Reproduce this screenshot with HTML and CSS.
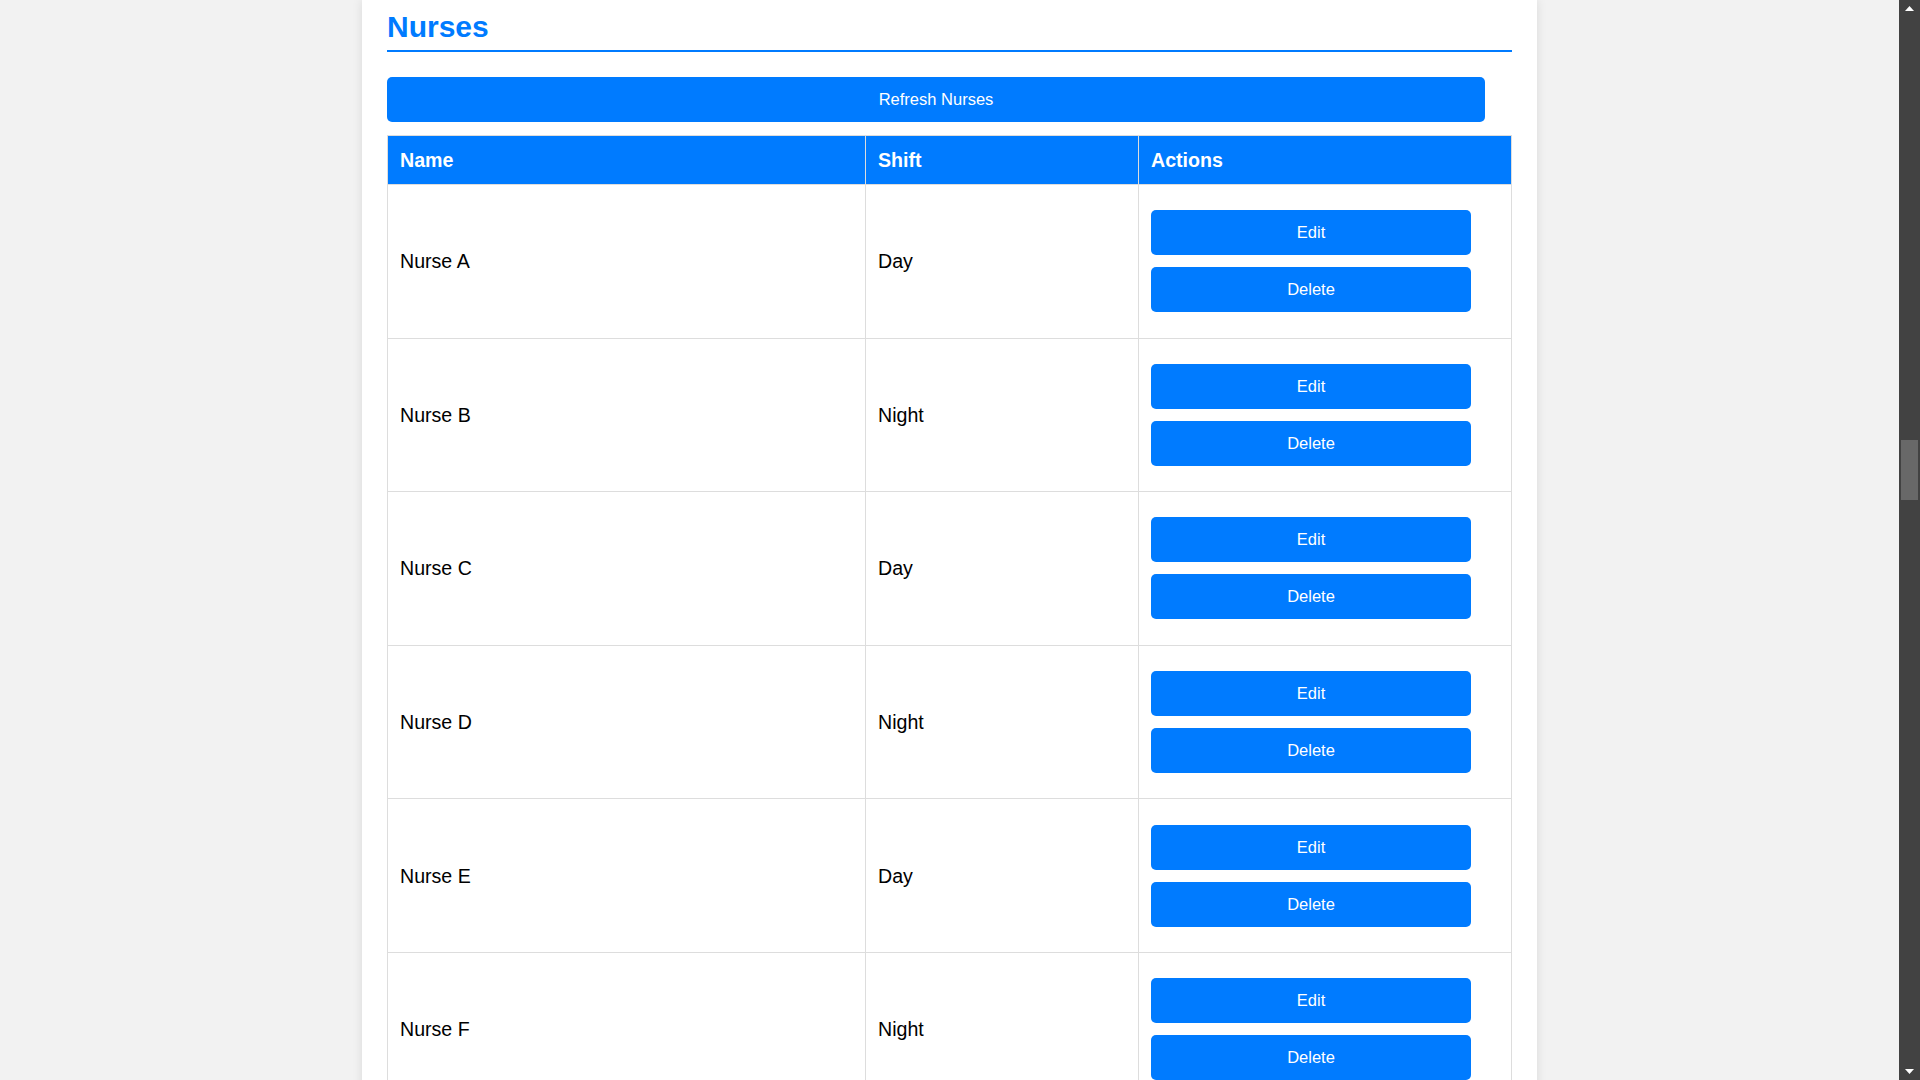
FILE: index.html
```html
<!DOCTYPE html>
<html lang="en">
<head>
<meta charset="utf-8">
<title>Nurses</title>
<link rel="stylesheet" href="styles.css">
</head>
<body>
<div class="page">
  <main class="container">
    <h2 class="section-title">Nurses</h2>
    <button class="btn btn-refresh">Refresh Nurses</button>
    <table class="nurse-table">
      <colgroup>
        <col class="col-name">
        <col class="col-shift">
        <col class="col-actions">
      </colgroup>
      <thead>
        <tr><th>Name</th><th>Shift</th><th>Actions</th></tr>
      </thead>
      <tbody>
        <tr><td>Nurse A</td><td>Day</td><td class="actions"><div class="action-stack"><button class="btn btn-action">Edit</button><button class="btn btn-action">Delete</button></div></td></tr>
        <tr><td>Nurse B</td><td>Night</td><td class="actions"><div class="action-stack"><button class="btn btn-action">Edit</button><button class="btn btn-action">Delete</button></div></td></tr>
        <tr><td>Nurse C</td><td>Day</td><td class="actions"><div class="action-stack"><button class="btn btn-action">Edit</button><button class="btn btn-action">Delete</button></div></td></tr>
        <tr><td>Nurse D</td><td>Night</td><td class="actions"><div class="action-stack"><button class="btn btn-action">Edit</button><button class="btn btn-action">Delete</button></div></td></tr>
        <tr><td>Nurse E</td><td>Day</td><td class="actions"><div class="action-stack"><button class="btn btn-action">Edit</button><button class="btn btn-action">Delete</button></div></td></tr>
        <tr><td>Nurse F</td><td>Night</td><td class="actions"><div class="action-stack"><button class="btn btn-action">Edit</button><button class="btn btn-action">Delete</button></div></td></tr>
      </tbody>
    </table>
  </main>
</div>
<div class="scrollbar">
  <div class="sb-arrow">
    <svg width="9" height="5" viewBox="0 0 9 5"><polygon points="4.5,0 9,5 0,5" fill="#fff"/></svg>
  </div>
  <div class="sb-track"><div class="sb-thumb"></div></div>
  <div class="sb-arrow">
    <svg width="9" height="5" viewBox="0 0 9 5"><polygon points="0,0 9,0 4.5,5" fill="#fff"/></svg>
  </div>
</div>
</body>
</html>
```

FILE: styles.css
```css
html, body {
  margin: 0;
  padding: 0;
  height: 100%;
}

body {
  display: flex;
  height: 100vh;
  overflow: hidden;
  font-family: "Liberation Sans", Arial, sans-serif;
  color: #000;
}

.page {
  flex: 1;
  background: #f2f2f2;
  overflow: hidden;
}

.container {
  width: 1125px;
  min-height: 100%;
  margin: 0 auto;
  padding: 10px 25px 0;
  background: #fff;
  box-shadow: 0 0 10px rgba(0, 0, 0, 0.1);
}

.section-title {
  margin: 0;
  font-size: 30px;
  line-height: 34px;
  font-weight: bold;
  color: #007bff;
  padding-bottom: 6px;
  border-bottom: 2px solid #007bff;
}

.btn {
  font-family: "Liberation Sans", Arial, sans-serif;
  font-size: 16.5px;
  color: #fff;
  background: #007bff;
  border: none;
  border-radius: 5px;
  padding: 0;
  height: 45px;
  cursor: pointer;
}

.btn-refresh {
  display: block;
  width: calc(100% - 27px);
  margin: 25px 0 13px;
}

.nurse-table {
  width: 100%;
  border-collapse: collapse;
  table-layout: fixed;
  font-size: 19.6px;
}

.col-name { width: 478px; }
.col-shift { width: 273px; }

.nurse-table th,
.nurse-table td {
  border: 1px solid #ddd;
  text-align: left;
  vertical-align: middle;
}

.nurse-table th {
  background: #007bff;
  color: #fff;
  font-weight: bold;
  line-height: 22px;
  padding: 13px 12px;
}

.nurse-table td {
  padding: 0 12px;
  line-height: 22px;
}

.nurse-table td.actions {
  padding: 25.3px 12px;
}

.action-stack {
  display: flex;
  flex-direction: column;
  gap: 12px;
}

.btn-action {
  width: 320px;
}

.scrollbar {
  width: 21px;
  flex: none;
  background: #424242;
  display: flex;
  flex-direction: column;
  align-items: center;
}

.sb-arrow {
  height: 17px;
  display: flex;
  align-items: center;
  justify-content: center;
  flex: none;
}

.sb-arrow svg {
  display: block;
}

.sb-track {
  flex: 1;
  align-self: stretch;
  display: flex;
  justify-content: center;
}

.sb-thumb {
  width: 17px;
  height: 60px;
  margin-top: 423px;
  background: #686868;
}
```
